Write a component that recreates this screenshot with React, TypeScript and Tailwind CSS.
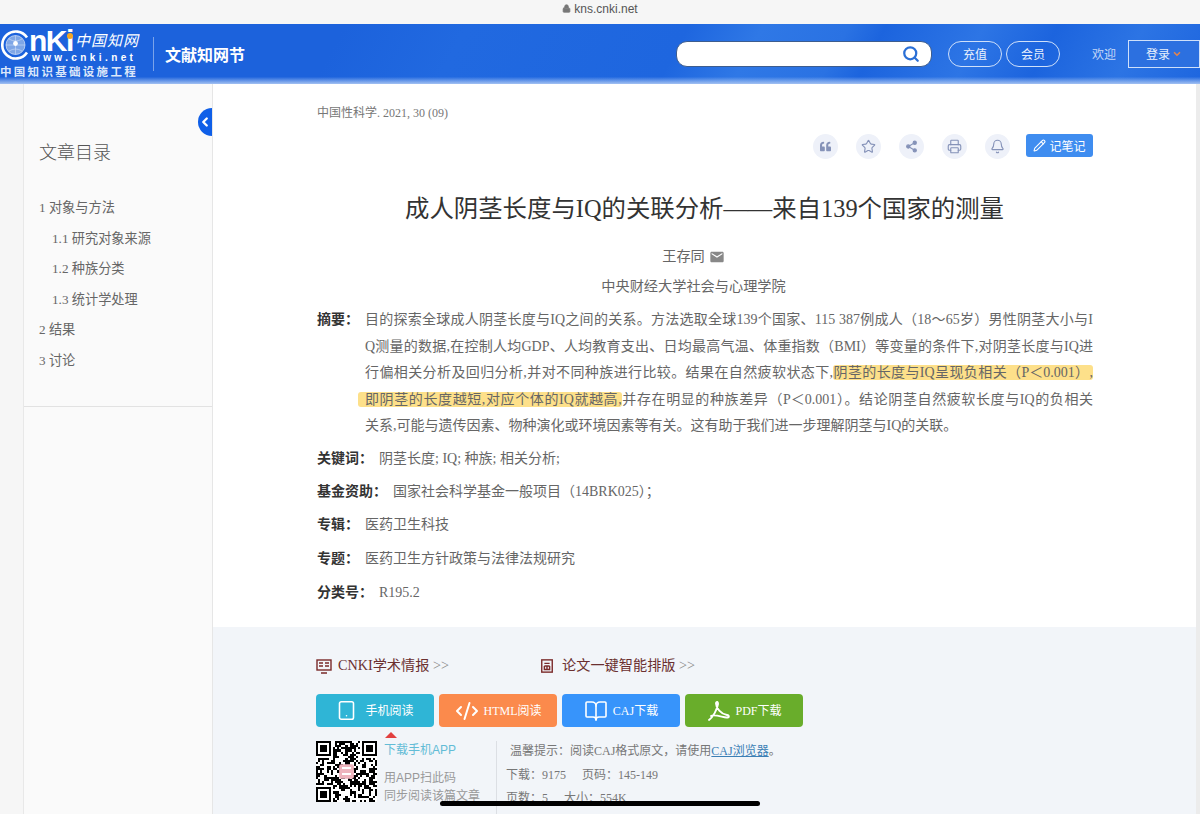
import React from "react";
import { Lock, Search, Star, Share2, Printer, Bell, Pencil, ChevronLeft, ChevronDown, Tablet, BookOpen, CodeXml } from "lucide-react";
import { FaQuoteLeft } from "react-icons/fa";
import { MdEmail } from "react-icons/md";

const SERIF = "font-['Liberation_Serif','Noto_Sans_CJK_SC',serif]";

function qrCells() {
  const n = 29;
  const cells: [number, number][] = [];
  let s = 12345;
  const rnd = () => {
    s = (s * 1103515245 + 12345) & 0x7fffffff;
    return (s >> 12) % 100;
  };
  const inFinder = (x: number, y: number) =>
    (x < 8 && y < 8) || (x >= n - 8 && y < 8) || (x < 8 && y >= n - 8);
  for (let y = 0; y < n; y++) {
    for (let x = 0; x < n; x++) {
      if (!inFinder(x, y) && rnd() < 52) cells.push([x, y]);
    }
  }
  return cells;
}
const QR = qrCells();

function Finder({ x, y }: { x: number; y: number }) {
  return (
    <g>
      <rect x={x + 0.5} y={y + 0.5} width="6" height="6" fill="none" stroke="#000" strokeWidth="1" />
      <rect x={x + 2} y={y + 2} width="3" height="3" fill="#000" />
    </g>
  );
}

function QRCode() {
  return (
    <svg viewBox="0 0 29 29" className="w-[61px] h-[61px] shrink-0" shapeRendering="crispEdges">
      <rect width="29" height="29" fill="#fff" />
      {QR.map(([x, y]) => (
        <rect key={x + "-" + y} x={x} y={y} width="1" height="1" fill="#000" />
      ))}
      <Finder x={0} y={0} />
      <Finder x={22} y={0} />
      <Finder x={0} y={22} />
      <rect x="11" y="11" width="7" height="7" rx="1" fill="#eeb4bd" shapeRendering="auto" />
      <rect x="12.5" y="12.5" width="4" height="1" fill="#fff" />
      <rect x="12.5" y="15" width="4" height="1" fill="#fff" />
    </svg>
  );
}

function Logo() {
  return (
    <div className="relative w-[140px] h-[60px] shrink-0 text-white overflow-hidden">
      <svg viewBox="0 0 30 30" className="absolute left-[1px] top-[6px] w-[30px] h-[30px]">
        <path d="M26 7.5 A13.5 13.5 0 1 0 26 22.5" fill="none" stroke="#fff" strokeWidth="2.6" />
        <circle cx="14.5" cy="15" r="9.5" fill="#7fa6e6" stroke="#dbe7fa" strokeWidth="0.7" />
        <path d="M5 15 H24 M14.5 5.5 V24.5 M8 9 Q14.5 13 21 9 M8 21 Q14.5 17 21 21" fill="none" stroke="#dbe7fa" strokeWidth="0.5" />
        <circle cx="14.5" cy="13.5" r="2.4" fill="#fff" />
      </svg>
      <div className="absolute left-[29px] top-[6px] font-['Liberation_Sans',sans-serif] font-bold text-[30px] leading-[21px] tracking-[-1.5px]">nKi</div>
      <div className="absolute left-[67px] top-[9px] w-[6px] h-[6px] rounded-full bg-[#f5a623]" />
      <div className="absolute left-[75px] top-[7px] font-['Noto_Sans_CJK_SC',sans-serif] text-[15px] leading-[18px] tracking-[1px] italic">中国知网</div>
      <div className="absolute left-[32px] top-[28px] font-['Liberation_Sans',sans-serif] font-bold text-[10px] leading-[12px] tracking-[3.4px] whitespace-nowrap">www.cnki.net</div>
      <div className="absolute left-0 top-[40px] font-['Noto_Sans_CJK_SC',sans-serif] font-bold text-[11.5px] leading-[14px] tracking-[2.3px] text-[#dbe7fa] whitespace-nowrap">中国知识基础设施工程</div>
    </div>
  );
}

function RoundIcon({ children }: { children: React.ReactNode }) {
  return (
    <div className="w-[25px] h-[25px] rounded-full bg-[#eef1f9] text-[#8592b8] flex items-center justify-center shrink-0">
      {children}
    </div>
  );
}

function Line({ children, last }: { children: React.ReactNode; last?: boolean }) {
  return (
    <span className={"block whitespace-nowrap h-[26.5px] " + (last ? "" : "[text-align-last:justify]")}>{children}</span>
  );
}

function Meta({ label, value, gap, h }: { label: string; value: string; gap: string; h: string }) {
  return (
    <div className={"flex items-center " + h}>
      <span className={"font-bold text-[#333] " + gap}>{label}</span>
      <span>{value}</span>
    </div>
  );
}

function ActionBtn({ bg, icon, text }: { bg: string; icon: React.ReactNode; text: string }) {
  return (
    <div className={"w-[118px] h-[33px] rounded-[4px] flex items-center justify-center gap-[5px] text-white text-[12px] " + bg}>
      {icon}
      <span>{text}</span>
    </div>
  );
}

function AcrobatIcon() {
  return (
    <svg viewBox="0 0 24 24" className="w-[24px] h-[24px]" fill="none" stroke="#fff" strokeWidth="1.9" strokeLinecap="round" strokeLinejoin="round">
      <path d="M3 21 C7 18 11 11 12 5 C12.3 2.5 10 2.5 10 4.5 C10 9 15 15 21 16 C23.5 16.5 23.5 19 20.5 18.5 C16 18 8 15 5 17" />
    </svg>
  );
}

function Toc({ sub, children }: { sub?: boolean; children: React.ReactNode }) {
  return <div className={"h-[30.5px] flex items-center whitespace-nowrap " + (sub ? "pl-[13px]" : "")}>{children}</div>;
}

export default function App() {
  return (
    <div className={"relative w-[1200px] h-[814px] overflow-hidden bg-white " + SERIF}>
      {/* browser address bar */}
      <div className="h-[24px] bg-[#f6f6f6] flex items-center justify-center gap-[3px] text-[#555] text-[12px] font-['Liberation_Sans',sans-serif] pb-[7px]">
        <Lock size={9} fill="#777" stroke="#777" />
        <span>kns.cnki.net</span>
      </div>

      {/* header */}
      <header className="h-[60px] flex items-center text-white bg-[linear-gradient(to_bottom,transparent_88%,#a3c1f2_100%),linear-gradient(118deg,#1c62dc_0%,#1c62dc_28%,#2169e0_38%,#1e66df_56%,#2f78e6_62%,#2a72e3_69%,#1c64de_72%,#2d75e5_80%,#1c64de_86%,#2c74e4_93%,#1e66df_100%)]">
        <Logo />
        <div className="w-px h-[34px] bg-[#7aa3ea] ml-[13px]" />
        <div className="ml-[11px] text-[16px] font-bold font-['Noto_Sans_CJK_SC',sans-serif] w-[120px] whitespace-nowrap">文献知网节</div>
        <div className="ml-[391px] w-[256px] h-[26px] rounded-[11px] bg-white border border-[#3d5d8f] flex items-center justify-end pr-[11px] shrink-0">
          <Search size={18} strokeWidth={3} className="text-[#2a6fd6]" />
        </div>
        <div className="ml-[16px] w-[54px] h-[26px] rounded-full border border-[#cfe0fa] flex items-center justify-center text-[12px] font-['Noto_Sans_CJK_SC',sans-serif] text-[#e8f0fd] shrink-0">充值</div>
        <div className="ml-[4px] w-[54px] h-[26px] rounded-full border border-[#cfe0fa] flex items-center justify-center text-[12px] font-['Noto_Sans_CJK_SC',sans-serif] text-[#e8f0fd] shrink-0">会员</div>
        <div className="ml-[32px] text-[12px] font-['Noto_Sans_CJK_SC',sans-serif] text-[#c5d8f7] w-[36px] shrink-0">欢迎</div>
        <div className="w-[72px] h-[28px] border border-[#cfe0fa] bg-[#2c70e0] flex items-center justify-center gap-[2px] text-[12px] font-['Noto_Sans_CJK_SC',sans-serif] text-[#e8f0fd] shrink-0">
          登录
          <ChevronDown size={10} strokeWidth={4} className="text-[#e0844f]" />
        </div>
      </header>

      <div className="flex h-[730px]">
        <div className="w-[24px] bg-[#f6f6f6] border-r border-[#e8e8e8] shrink-0" />

        {/* sidebar */}
        <aside className="relative w-[189px] shrink-0 bg-[#fafafa] border-r border-[#e6e6e6]">
          <div className="h-[323px] border-b border-[#e2e2e2] pl-[15px] pt-[55px] text-[#666] text-[13.2px]">
            <div className="text-[18px] leading-[24px] text-[#555] font-['Noto_Sans_CJK_SC',sans-serif] font-light">文章目录</div>
            <div className="mt-[30px]">
              <Toc>1 对象与方法</Toc>
              <Toc sub>1.1 研究对象来源</Toc>
              <Toc sub>1.2 种族分类</Toc>
              <Toc sub>1.3 统计学处理</Toc>
              <Toc>2 结果</Toc>
              <Toc>3 讨论</Toc>
            </div>
          </div>
          <div className="absolute right-0 top-[24px] w-[14px] h-[28px] rounded-l-full bg-[#0f5fe8] flex items-center justify-end text-white">
            <ChevronLeft size={14} strokeWidth={4} />
          </div>
        </aside>

        {/* main */}
        <main className="flex-1 min-w-0 flex flex-col">
          <div className="h-[543px] shrink-0 pl-[104px] pr-[104px] text-[#666] text-[14px]">
            <div className="pt-[20px] h-[38px] text-[12px] leading-[18px] text-[#777]">中国性科学. 2021, 30 (09)</div>
            <div className="mt-[12px] h-[25px] flex items-center">
              <div className="ml-[496px] flex items-center gap-[18px]">
                <RoundIcon><FaQuoteLeft size={11} /></RoundIcon>
                <RoundIcon><Star size={15} strokeWidth={1.8} /></RoundIcon>
                <RoundIcon><Share2 size={13} fill="#8592b8" /></RoundIcon>
                <RoundIcon><Printer size={15} strokeWidth={1.8} /></RoundIcon>
                <RoundIcon><Bell size={15} strokeWidth={1.8} /></RoundIcon>
              </div>
              <div className="ml-[16px] w-[67px] h-[23px] -mt-[2px] rounded-[3px] bg-[#3f8df0] text-white flex items-center justify-center gap-[3px] text-[12px] font-['Noto_Sans_CJK_SC',sans-serif] shrink-0">
                <Pencil size={13} />
                记笔记
              </div>
            </div>
            <h1 className="mt-[35px] h-[30px] text-[24.4px] leading-[30px] text-[#333] text-center whitespace-nowrap">成人阴茎长度与IQ的关联分析——来自139个国家的测量</h1>
            <div className="mt-[18px] h-[30px] pr-[22px] flex items-center justify-center gap-[4px] text-[14.2px]">
              王存同 <MdEmail size={16} className="text-[#888]" />
            </div>
            <div className="h-[30px] pr-[22px] flex items-center justify-center text-[14.2px]">中央财经大学社会与心理学院</div>
            <div className="mt-[5px] flex leading-[26.5px] h-[135px]">
              <span className="w-[48px] shrink-0 font-bold text-[#333]">摘要：</span>
              <div className="w-[728px] shrink-0">
                <Line>目的探索全球成人阴茎长度与IQ之间的关系。方法选取全球139个国家、115 387例成人（18～65岁）男性阴茎大小与I</Line>
                <Line>Q测量的数据,在控制人均GDP、人均教育支出、日均最高气温、体重指数（BMI）等变量的条件下,对阴茎长度与IQ进</Line>
                <Line>行偏相关分析及回归分析,并对不同种族进行比较。结果在自然疲软状态下,<span className="bg-[#fde08a] rounded-[3px]">阴茎的长度与IQ呈现负相关（P＜0.001）,</span></Line>
                <Line><span className="bg-[#fde08a] rounded-[3px] pl-[7px] -ml-[7px]">即阴茎的长度越短,对应个体的IQ就越高,</span>并存在明显的种族差异（P＜0.001）。结论阴茎自然疲软长度与IQ的负相关</Line>
                <Line last>关系,可能与遗传因素、物种演化或环境因素等有关。这有助于我们进一步理解阴茎与IQ的关联。</Line>
              </div>
            </div>
            <Meta label="关键词：" value="阴茎长度; IQ; 种族; 相关分析;" gap="mr-[6px]" h="h-[33px]" />
            <Meta label="基金资助：" value="国家社会科学基金一般项目（14BRK025）；" gap="mr-[6px]" h="h-[33px]" />
            <Meta label="专辑：" value="医药卫生科技" gap="mr-[6px]" h="h-[33px]" />
            <Meta label="专题：" value="医药卫生方针政策与法律法规研究" gap="mr-[6px]" h="h-[35px]" />
            <Meta label="分类号：" value="R195.2" gap="mr-[6px]" h="h-[33px]" />
          </div>

          {/* footer band */}
          <div className="flex-1 bg-[#f2f5f9] pl-[103px] pt-[28px]">
            <div className="flex items-center h-[22px] text-[14.2px] text-[#6b3030]">
              <div className="flex items-center gap-[6px] w-[224px]">
                <svg viewBox="0 0 16 16" className="w-[16px] h-[16px]" fill="none" stroke="#7a2a2a" strokeWidth="1.4">
                  <rect x="1" y="2" width="14" height="10" />
                  <path d="M5 15 H11 M3 5 H7 M3 8 H7 M9 5 H13 M9 8 H13" />
                </svg>
                <span>CNKI学术情报 <span className="text-[#888]">&gt;&gt;</span></span>
              </div>
              <div className="flex items-center gap-[8px]">
                <svg viewBox="0 0 16 16" className="w-[14px] h-[16px]" fill="none" stroke="#7a2a2a" strokeWidth="1.6">
                  <rect x="2" y="1" width="12" height="14" />
                  <path d="M5 5 H11 M5 8 H11 M5 8 V12 H11 V8 M8 8 V12" />
                </svg>
                <span>论文一键智能排版 <span className="text-[#888]">&gt;&gt;</span></span>
              </div>
            </div>
            <div className="mt-[17px] flex gap-[5px]">
              <ActionBtn bg="bg-[#2fb5d6]" icon={<Tablet size={21} strokeWidth={1.8} className="mr-[3px]" />} text="手机阅读" />
              <ActionBtn bg="bg-[#fb8a4c]" icon={<CodeXml size={24} strokeWidth={2} />} text="HTML阅读" />
              <ActionBtn bg="bg-[#3794fb]" icon={<BookOpen size={24} strokeWidth={1.6} />} text="CAJ下载" />
              <ActionBtn bg="bg-[#69ad2b]" icon={<AcrobatIcon />} text="PDF下载" />
            </div>
            <div className="flex mt-[5px]">
              <div className="w-[68px] pt-[9px] shrink-0"><QRCode /></div>
              <div className="w-[112px] shrink-0 relative font-['Liberation_Sans','Noto_Sans_CJK_SC',sans-serif] text-[12px] text-[#999]">
                <div className="w-0 h-0 ml-[1px] border-x-[6px] border-x-transparent border-b-[6px] border-b-[#e2403f]" />
                <div className="text-[#62bcd6] leading-[18px] mt-[3px]">下载手机APP</div>
                <div className="mt-[10px] leading-[18px]">用APP扫此码</div>
                <div className="whitespace-nowrap leading-[18px]">同步阅读该篇文章</div>
              </div>
              <div className="h-[80px] mt-[9px] border-l border-[#dcdfe4] pl-[9px] text-[12px] text-[#777] whitespace-nowrap">
                <div className="h-[20px] flex items-center pl-[4px]">
                  温馨提示：阅读CAJ格式原文，请使用<span className="text-[#3c7fb5] underline">CAJ浏览器</span>。
                </div>
                <div className="mt-[4px] h-[20px] flex items-center gap-[16px]">
                  <span>下载：9175</span>
                  <span>页码：145-149</span>
                </div>
                <div className="mt-[3px] h-[20px] flex items-center gap-[16px]">
                  <span>页数：5</span>
                  <span>大小：554K</span>
                </div>
              </div>
            </div>
          </div>
        </main>

        <div className="w-[4px] bg-[#ececec] shrink-0" />
      </div>

      {/* home indicator */}
      <div className="absolute left-[440px] top-[801px] w-[320px] h-[5px] rounded-full bg-black" />
    </div>
  );
}
